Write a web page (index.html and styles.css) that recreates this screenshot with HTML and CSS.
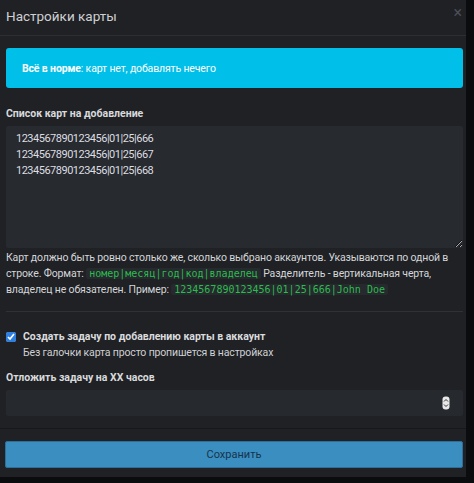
FILE: index.html
```html
<!DOCTYPE html>
<html lang="ru">
<head>
  <meta charset="UTF-8" />
  <meta name="viewport" content="width=device-width, initial-scale=1.0" />
  <title>Настройки карты</title>
  <link rel="stylesheet" href="styles.css">
</head>
<body>
  <div class="modal">
    <div class="modal-header">
      <h1>Настройки карты</h1>
      <span class="close">&times;</span>
    </div>

    <div class="modal-body">
      <div class="alert"><b>Всё в норме</b>: карт нет, добавлять нечего</div>

      <label class="field-label">Список карт на добавление</label>
      <textarea class="cards">1234567890123456|01|25|666
1234567890123456|01|25|667
1234567890123456|01|25|668</textarea>
      <p class="help">Карт должно быть ровно столько же, сколько выбрано аккаунтов. Указываются по одной в строке. Формат: <code>номер|месяц|год|код|владелец</code> Разделитель - вертикальная черта, владелец не обязателен. Пример: <code>1234567890123456|01|25|666|John Doe</code></p>

      <hr />

      <div class="check">
        <input type="checkbox" checked />
        <div>
          <div class="check-title">Создать задачу по добавлению карты в аккаунт</div>
          <div class="check-sub">Без галочки карта просто пропишется в настройках</div>
        </div>
      </div>

      <label class="field-label">Отложить задачу на XX часов</label>
      <div class="number">
        <span class="spin">
          <svg width="8" height="14" viewBox="0 0 8 14"><rect x="0.5" y="0.5" width="7" height="13" rx="3" fill="#e8e8e8"/><path d="M2 5.5 L4 3.5 L6 5.5 M2 8.5 L4 10.5 L6 8.5" stroke="#333" stroke-width="1" fill="none"/></svg>
        </span>
      </div>
    </div>

    <div class="modal-footer">
      <button>Сохранить</button>
    </div>
  </div>
</body>
</html>
```

FILE: styles.css
```css
body {
  margin: 0;
  background: #0b0c0e;
  font-family: Roboto, 'Noto Sans', sans-serif;
  font-size: 10.5px;
  letter-spacing: -0.15px;
  color: #d6d7d9;
}

.modal {
  width: 466px;
  background: #1f2125;
  padding-bottom: 9px;
}

.modal-header {
  height: 35px;
  border-bottom: 1px solid #2b2e33;
  display: flex;
  align-items: center;
  justify-content: space-between;
  padding: 0 6px;
}

.modal-header h1 {
  margin: 0 0 4px;
  font-size: 13.5px;
  font-weight: 400;
  letter-spacing: 0;
  color: #cfd0d2;
}

.close {
  font-size: 16px;
  color: #4c4f55;
  margin: 0 -2px 10px 0;
}

.modal-body {
  padding: 12px 3px 0 6px;
}

.alert {
  height: 40px;
  background: #00bfe9;
  border-radius: 3px;
  display: flex;
  align-items: center;
  padding: 0 16px;
  color: #fff;
}

.field-label {
  display: block;
  font-weight: 700;
  letter-spacing: 0;
  color: #d8d9db;
  margin: 18px 0 4px;
  line-height: 16px;
}

.cards {
  display: block;
  box-sizing: border-box;
  width: 457px;
  height: 122px;
  background: #272a2f;
  border: none;
  border-radius: 2px;
  padding: 5px 10px;
  color: #dcdde0;
  font-family: Roboto, 'Noto Sans', sans-serif;
  font-size: 11px;
  letter-spacing: -0.5px;
  line-height: 16px;
  resize: vertical;
}

.help {
  margin: 2px 0 0;
  line-height: 16px;
  color: #d4d5d8;
}

.help code {
  font-family: 'DejaVu Sans Mono', monospace;
  font-size: 10px;
  line-height: 12px;
  letter-spacing: 0;
  color: #2bbd4d;
  background: #26292d;
  padding: 0 3px;
  border-radius: 2px;
}

hr {
  width: 457px;
  margin: 13px 0 17px;
  border: none;
  border-top: 1px solid #2e3136;
}

.check {
  display: flex;
  gap: 7px;
  line-height: 16px;
}

.check input {
  margin: 3px 0 0;
  width: 10px;
  height: 10px;
  accent-color: #2f7fe0;
}

.check-title {
  font-weight: 700;
  letter-spacing: 0;
  color: #dadbdd;
}

.check-sub {
  color: #cfd0d3;
}

.check + .field-label {
  margin-top: 9px;
}

.number {
  width: 457px;
  height: 26px;
  background: #26292d;
  border-radius: 2px;
  display: flex;
  align-items: center;
  justify-content: flex-end;
}

.spin {
  display: flex;
  margin-right: 13px;
}

.modal-footer {
  margin-top: 12px;
  border-top: 1px solid #17181b;
  padding: 12px 3px 0 5px;
}

button {
  display: block;
  width: 458px;
  height: 27px;
  background: #3a8ec0;
  border: 1px solid #2d6f98;
  border-radius: 2px;
  color: #17344d;
  font-family: Roboto, 'Noto Sans', sans-serif;
  font-size: 11px;
}
```
